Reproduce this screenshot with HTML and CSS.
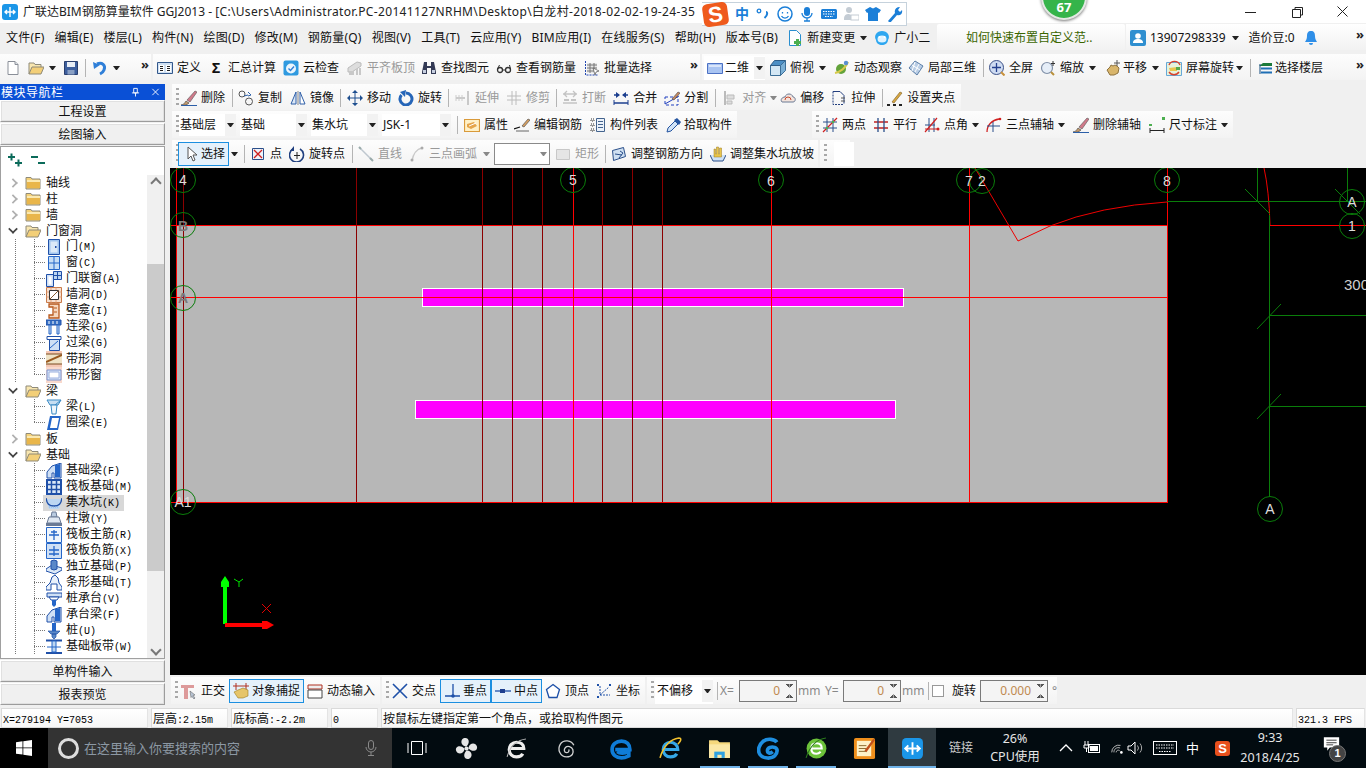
FILE: index.html
```html
<!DOCTYPE html>
<html lang="zh-CN">
<head>
<meta charset="utf-8">
<title>广联达BIM钢筋算量软件 GGJ2013</title>
<link rel="stylesheet" href="styles.css">
</head>
<body>
<svg class="defs" aria-hidden="true">
<symbol id="folder" viewBox="0 0 16 16"><path d="M1 4V2.500h5L7 4h8v10H1z" fill="#f5d27a" stroke="#8f8a78"/><path d="M2 6h13v7H2z" fill="#e9b64a"/><path d="M2 5h13v2H2z" fill="#fbe9b0"/></symbol>
<symbol id="folderopen" viewBox="0 0 16 16"><path d="M1 14V3h5l1 1.500h6V7" fill="#f8e6b0" stroke="#8f8a78"/><path d="M1 14l3-7h12l-3 7z" fill="#f3cf78" stroke="#8f8a78"/></symbol>
<symbol id="new" viewBox="0 0 16 16"><path d="M3 1.500h7l3 3v10H3z" fill="#fff" stroke="#8a8f98"/><path d="M10 1.500v3h3" fill="#dfe3e8" stroke="#8a8f98"/></symbol>
<symbol id="save" viewBox="0 0 16 16"><path d="M1.500 1.500h13v13h-13z" fill="#3d5f9e" stroke="#2a3f6e"/><path d="M4 2h8v5H4z" fill="#e8eef6"/><path d="M4.500 10h7v4.500h-7z" fill="#8aa0c4"/></symbol>
<symbol id="undo" viewBox="0 0 16 16"><path d="M5 4c5-2 9 1 7 6-.6 1.600-2 3-4 4" fill="none" stroke="#2f7fd8" stroke-width="3"/><path d="M1 2l1 7 6-4z" fill="#2f7fd8"/></symbol>
<symbol id="def" viewBox="0 0 16 16"><path d="M.5 2.500h15v11H.5z" fill="#cfe0f2" stroke="#33588c"/><path d="M2 5h5v7H2zM9 5h5v7H9z" fill="#fff"/><path d="M3 6.500h3M3 8.500h3M3 10.500h3M10 6.500h3M10 8.500h3M10 10.500h3" stroke="#222"/></symbol>
<symbol id="cloud" viewBox="0 0 16 16"><rect x=".5" y=".5" width="15" height="15" rx="2" fill="#2f9ae0"/><circle cx="8" cy="8.500" r="5" fill="#eaf5fc"/><path d="M5.500 8.500l2 2 3.500-4" fill="none" stroke="#2f7fd8" stroke-width="1.400"/></symbol>
<symbol id="flush" viewBox="0 0 16 16"><path d="M1 8l9-6 4 1v3l-9 6H1z" fill="#ddd" stroke="#bbb"/><path d="M2 11h5v4H2zM9 9h2v6H9zM12 8h2v7h-2z" fill="#c8c8c8"/></symbol>
<symbol id="binoc" viewBox="0 0 16 16"><path d="M3 2h3v4h4V2h3l2 10v2H10V8H6v6H1v-2z" fill="#333a55"/><path d="M2 10h3v3H2zM11 10h3v3h-3z" fill="#c7cfe0"/></symbol>
<symbol id="glass" viewBox="0 0 16 16"><circle cx="4" cy="10" r="2.500" fill="none" stroke="#333" stroke-width="1.300"/><circle cx="12" cy="10" r="2.500" fill="none" stroke="#333" stroke-width="1.300"/><path d="M6.500 10h3M1.500 9l2-4M14.500 9l-1-4" stroke="#333" fill="none"/></symbol>
<symbol id="batch" viewBox="0 0 16 16"><path d="M1.500 1v14h13" fill="none" stroke="#2247b0" stroke-dasharray="2 1"/><path d="M3 3h10v10H3z" fill="#e8e8e8"/><path d="M3 5h10M3 8h10M3 11h8M6 3v10M10 3v7" stroke="#777"/><path d="M9 8l6 3-3 1-1 3z" fill="#fff" stroke="#555" stroke-width=".7"/></symbol>
<symbol id="rect2d" viewBox="0 0 16 16"><path d="M.5 3.500h15v10H.5z" fill="#a9c4f2" stroke="#4c71c4"/><path d="M2 5h12v2H2z" fill="#d9e5fa"/></symbol>
<symbol id="cube" viewBox="0 0 16 16"><path d="M.5 5.500h10v10H.5z" fill="#d4e7f4" stroke="#3c6e97"/><path d="M.5 5.500l4-5h11l-5 5z" fill="#4c8fc5" stroke="#2e5d88"/><path d="M10.500 5.500l5-5v10l-5 5z" fill="#7bb0d6" stroke="#3c6e97"/></symbol>
<symbol id="orbit" viewBox="0 0 16 16"><circle cx="7" cy="9" r="5" fill="#63a33a"/><path d="M1 13c5-1 11-5 13-11" fill="none" stroke="#d6c94a" stroke-width="2"/><circle cx="12" cy="3" r="2.200" fill="#5a8fd0"/></symbol>
<symbol id="local3d" viewBox="0 0 16 16"><path d="M1 8l6-7 8 5-6 9z" fill="#b9cde5" stroke="#5c7fa8"/><path d="M4 5l8 5M7 2l-3 9M11 4l-4 8" stroke="#fff"/></symbol>
<symbol id="full" viewBox="0 0 16 16"><circle cx="7.500" cy="7.500" r="7" fill="#cfdcf2" stroke="#3a4f86"/><path d="M7.500 3v9M3 7.500h9" stroke="#25418f" stroke-width="1.300"/><path d="M12 12l3.500 3.500" stroke="#c8913c" stroke-width="2"/></symbol>
<symbol id="zoom" viewBox="0 0 16 16"><circle cx="7" cy="8" r="5.500" fill="#e6eef8" stroke="#8090a8" stroke-width="1.200"/><path d="M11 12l3 3" stroke="#b9903c" stroke-width="2"/><path d="M13 1v5M11 3.500h4" stroke="#333"/></symbol>
<symbol id="pan" viewBox="0 0 16 16"><path d="M2 10l3-3 1-2 2 1 2-1 2 1 2 2-1 5-4 2H5z" fill="#d9b66c" stroke="#8e7340"/><path d="M12 0v6M9 3h6" stroke="#555"/></symbol>
<symbol id="rots" viewBox="0 0 16 16"><path d="M.5 2.500h15v13H.5z" fill="#e7f2dc" stroke="#66a8d8"/><path d="M3 5a6 6 0 0 1 11 0M13 12a6 6 0 0 1-10 0" fill="none" stroke="#d8402c" stroke-width="1.400"/><path d="M3 8l8-1v4H4z" fill="#e9c550"/><path d="M10 7h4v3h-4z" fill="#56a94c"/></symbol>
<symbol id="layers" viewBox="0 0 16 16"><path d="M15 3H6L2 6h13" fill="#1c7a3a"/><path d="M15 7.500H4v2h11z" fill="#1f6fb5"/><path d="M15 11.500H4v2h11z" fill="#1f6fb5"/><path d="M3 4v10" stroke="#124a7e"/></symbol>
<symbol id="brush" viewBox="0 0 16 16"><path d="M0 15c2 0 3-1 5-4l3 2c-2 2-4 2.500-8 2z" fill="#c49a6c" stroke="#3d3d3d" stroke-width=".6"/><path d="M6 10L14 1l2 1-7 10z" fill="#d07a8a" stroke="#555" stroke-width=".6"/><path d="M0 15.500h16" stroke="#2b5fa8"/></symbol>
<symbol id="copy" viewBox="0 0 16 16"><circle cx="4" cy="4" r="3" fill="none" stroke="#555"/><circle cx="11" cy="11.500" r="3.500" fill="none" stroke="#555"/><path d="M6 6l4-1M10 2l3 3-3 1" fill="none" stroke="#2b5fa8"/></symbol>
<symbol id="mirror" viewBox="0 0 16 16"><path d="M6 2v12H1z" fill="#dbe7f6" stroke="#2f5fa8"/><path d="M10 2v12h5z" fill="#fff" stroke="#2f5fa8"/><path d="M8 1v14" stroke="#888"/></symbol>
<symbol id="move" viewBox="0 0 16 16"><path d="M8 1v14M1 8h14" stroke="#1f4f8f"/><path d="M8 0l3 3H5zM8 16l-3-3h6zM0 8l3-3v6zM16 8l-3 3V5z" fill="#1f4f8f"/></symbol>
<symbol id="rotate" viewBox="0 0 16 16"><path d="M3.500 5a6 6 0 1 0 4.500-2" fill="none" stroke="#2565b8" stroke-width="3"/><path d="M8 0l-1 7-5-5z" fill="#2565b8"/></symbol>
<symbol id="extend" viewBox="0 0 16 16"><path d="M13 1v14M1 8h9" stroke="#bbb" stroke-width="1.500"/><path d="M1 5v6M4 5v6M7 5v6" stroke="#ccc"/></symbol>
<symbol id="trim" viewBox="0 0 16 16"><path d="M6 1v14M10 1v14M1 6h14M1 10h14" stroke="#bcbcbc"/></symbol>
<symbol id="breakg" viewBox="0 0 16 16"><path d="M1 4h14M1 13h14M5 1L2 4l3 3M11 1l3 3-3 3" fill="none" stroke="#c3c3c3" stroke-width="1.300"/><path d="M2 10h5M9 10h5" stroke="#c3c3c3" stroke-width="2"/></symbol>
<symbol id="merge" viewBox="0 0 16 16"><path d="M1 13h14M1 5h5M10 5h5" stroke="#1c3f8f" stroke-width="1.400"/><path d="M7 5L3 2v6zM9 5l4-3v6z" fill="#1c3f8f"/><path d="M1 10v5M15 10v5" stroke="#1c3f8f"/></symbol>
<symbol id="split" viewBox="0 0 16 16"><path d="M1 14L15 6" stroke="#2040c0"/><path d="M1 7h13v8H1z" fill="none" stroke="#2040c0" stroke-dasharray="3 2"/><path d="M8 9l6-7 2 1-6 7z" fill="#c98a60" stroke="#444" stroke-width=".6"/></symbol>
<symbol id="align" viewBox="0 0 16 16"><path d="M3 1v14" stroke="#bbb" stroke-width="2"/><path d="M5 5h7v4H5zM5 11h5v3H5z" fill="#ddd" stroke="#bbb"/></symbol>
<symbol id="offset" viewBox="0 0 16 16"><path d="M2 12c-2-2 0-5 3-5 1-4 7-4 8 0 3 0 3 5 0 5z" fill="#f3e3dc" stroke="#6a7a95"/><path d="M5 10a3 3 0 0 1 6 0" fill="none" stroke="#c44a30"/></symbol>
<symbol id="stretch" viewBox="0 0 16 16"><path d="M2 1.500h7l4 4v8" fill="none" stroke="#233f7f"/><path d="M2 1.500v13h11" fill="none" stroke="#233f7f" stroke-dasharray="2 1"/><path d="M10 8h4M10 11h4" stroke="#555"/></symbol>
<symbol id="grips" viewBox="0 0 16 16"><path d="M5 12L13 2l2 1-8 10z" fill="#d8a840" stroke="#8a6a30" stroke-width=".7"/><path d="M0 15h3M6 15h3M12 15h3" stroke="#222" stroke-width="2"/></symbol>
<symbol id="prop" viewBox="0 0 16 16"><path d="M.5 2.500h15v12H.5z" fill="#fff1c7" stroke="#d99a3a" stroke-width="1.200"/><path d="M3 7l7-2 3 4-6 3-4-2z" fill="#e5a54a"/><path d="M5 9l7-3" stroke="#fff"/></symbol>
<symbol id="editr" viewBox="0 0 16 16"><path d="M8 9l6-7 2 1-6 7z" fill="#d8a060" stroke="#555" stroke-width=".7"/><path d="M0 12l6-2" stroke="#111" stroke-width="1.300"/><path d="M2 14h13" stroke="#666"/></symbol>
<symbol id="list" viewBox="0 0 16 16"><path d="M6.500 1.500h8v13h-8z" fill="#eaf1fa" stroke="#44648e"/><path d="M8 4.500h5M8 7.500h5M8 10.500h5" stroke="#44648e"/><path d="M1 2h3v2H1zM1 7h3v2H1zM1 12h3v2H1z" fill="none" stroke="#333" stroke-dasharray="1 1"/></symbol>
<symbol id="pick" viewBox="0 0 16 16"><path d="M1 15l1-4 7-7 3 3-7 7z" fill="#d0e2f6" stroke="#2454a0"/><path d="M8 3l3-2 4 4-2 3z" fill="#2454a0"/></symbol>
<symbol id="twop" viewBox="0 0 16 16"><path d="M5 1v14M11 1v14M1 5h14M1 11h14" stroke="#2a4f8a"/><path d="M1 15L15 1" stroke="#d02020" stroke-width="1.200"/><circle cx="5" cy="11" r="1.300" fill="#4caf50"/><circle cx="11" cy="5" r="1.300" fill="#4caf50"/></symbol>
<symbol id="para" viewBox="0 0 16 16"><path d="M1 5h14M1 11h14" stroke="#c02020" stroke-width="1.300"/><path d="M5 1v14M11 1v14" stroke="#2a4f8a" stroke-width="1.300"/></symbol>
<symbol id="angle" viewBox="0 0 16 16"><path d="M5 1v14M10 1v14M1 8h10" stroke="#2a4f8a"/><path d="M1 15L13 1" stroke="#d02020" stroke-width="1.200"/><path d="M1 12l14 0" stroke="#d02020"/><circle cx="14" cy="12" r="1.500" fill="#d02020"/></symbol>
<symbol id="arcax" viewBox="0 0 16 16"><path d="M1 15C1 8 6 3 13 2" fill="none" stroke="#d02020" stroke-width="1.300"/><path d="M1 9h13M7 5v10" stroke="#2a4f8a"/><circle cx="14" cy="2" r="1.300" fill="#d02020"/></symbol>
<symbol id="dim" viewBox="0 0 16 16"><path d="M1 13.500h14M1 11v5M15 11v5" stroke="#222"/><path d="M0 7h3v2H0zM13 0h3v3h-3z" fill="#4caf50"/></symbol>
<symbol id="cursor" viewBox="0 0 16 16"><path d="M4 1v12l3-3 2 5 2-1-2-5h4z" fill="#fff" stroke="#555"/></symbol>
<symbol id="point" viewBox="0 0 16 16"><path d="M2.500 2.500h11v11h-11z" fill="#eef3fa" stroke="#2a4f8a"/><path d="M4 4l8 8M12 4l-8 8" stroke="#d02020" stroke-width="1.300"/></symbol>
<symbol id="rotp" viewBox="0 0 16 16"><path d="M4 3a7 7 0 1 0 7 0" fill="none" stroke="#1f3f7f" stroke-width="1.600"/><path d="M5 0v5H1z" fill="#1f3f7f"/><path d="M8 6v7M5 9.500h6" stroke="#222"/></symbol>
<symbol id="line" viewBox="0 0 16 16"><path d="M2 2l11 11" stroke="#bfc7cf" stroke-width="1.500"/><path d="M1 1l2 2M12 12l3 3" stroke="#9aa" stroke-width="2"/></symbol>
<symbol id="arc" viewBox="0 0 16 16"><path d="M3 15C4 8 8 3 13 2" fill="none" stroke="#c9c9c9" stroke-width="1.500"/><circle cx="13" cy="2" r="1.500" fill="#aaa"/><circle cx="3" cy="14" r="1.500" fill="#aaa"/></symbol>
<symbol id="rectg" viewBox="0 0 16 16"><path d="M1.500 3.500h13v10h-13z" fill="#e5e5e5" stroke="#c8c8c8"/></symbol>
<symbol id="adj" viewBox="0 0 16 16"><path d="M1.500 4.500l11-3 2 9-12 4z" fill="#cfe0f2" stroke="#2a4f8a"/><path d="M4 8l7 1M9 5l3 2-4 5" fill="none" stroke="#2a4f8a"/></symbol>
<symbol id="pit" viewBox="0 0 16 16"><path d="M0 9l3 6h10l3-6" fill="#cfe2f5"/><path d="M0 9l3 6h10l3-6" fill="none" stroke="#2a4f8a"/><path d="M4 11V3h1.500v5h1V1h2v7h1V2h2v9z" fill="#e9c54a" stroke="#9a7a20" stroke-width=".5"/></symbol>
<symbol id="ortho" viewBox="0 0 16 16"><path d="M0 2h13v3H7v11H3V5H0z" fill="#dd9a9a"/><path d="M9 8l5 4-2 .5 2 2.500-1 1-2-2.500-1 1z" fill="#b8c4d4" stroke="#555" stroke-width=".5"/></symbol>
<symbol id="snap" viewBox="0 0 16 16"><path d="M3 0v7M13 0v7" stroke="#b03020"/><path d="M0 3h16" stroke="#b03020"/><path d="M1 9l4-2 5-2 5 2v6l-5 2H5z" fill="#e6c56a" stroke="#9a7a20" stroke-width=".6"/></symbol>
<symbol id="dyn" viewBox="0 0 16 16"><path d="M1 2h14v4H1z" fill="#eee" stroke="#b03020"/><path d="M1 7h14v8H1z" fill="#fff" stroke="#444"/></symbol>
<symbol id="cross" viewBox="0 0 16 16"><path d="M1 1l14 14M15 1L1 15" stroke="#1e50a8" stroke-width="1.600"/></symbol>
<symbol id="perp" viewBox="0 0 16 16"><path d="M9 1v12M1 13h15" stroke="#1e50a8" stroke-width="1.300"/><circle cx="9" cy="13" r="1.800" fill="#1e50a8"/></symbol>
<symbol id="mid" viewBox="0 0 16 16"><path d="M0 8h16" stroke="#1e50a8" stroke-width="1.300"/><rect x="5" y="6" width="5" height="4" fill="#1e3f8f"/></symbol>
<symbol id="vert" viewBox="0 0 16 16"><path d="M8 1.500l6.500 5-2.500 8H4l-2.500-8z" fill="#fff" stroke="#1e50a8" stroke-width="1.300"/></symbol>
<symbol id="coord" viewBox="0 0 16 16"><path d="M4 3v9h10M4 12L13 4" fill="none" stroke="#1e50a8" stroke-dasharray="2 1"/><path d="M1 1h2v2H1zM13 1h2v2h-2zM1 13h2v2H1z" fill="#1e50a8"/></symbol>
<symbol id="door" viewBox="0 0 16 16"><path d="M2.500 .5h11v15h-11z" fill="#9fc4ee" stroke="#2050a8"/><path d="M4.500 2.500h7v11h-7z" fill="#dbe9f8"/><rect x="9" y="7" width="1.500" height="2" fill="#2050a8"/></symbol>
<symbol id="win" viewBox="0 0 16 16"><path d="M2.500 1.500h11v13h-11z" fill="#c7def6" stroke="#2566c8"/><path d="M8 1.500v13M2.500 8h11" stroke="#2566c8"/></symbol>
<symbol id="doorw" viewBox="0 0 16 16"><path d="M.5 3.500h7v12h-7z" fill="#cfe0f5" stroke="#2050a8"/><path d="M2.500 5.500h3v8h-3z" fill="#fff"/><path d="M7.500.5h8v8h-8z" fill="#bcd6f2" stroke="#2050a8"/><path d="M11.500.5v8M7.500 4.500h8" stroke="#2050a8"/></symbol>
<symbol id="hole" viewBox="0 0 16 16"><path d="M.5 .5h15v15H.5z" fill="#f7e0d0" stroke="#c87a48"/><path d="M.5 5h15M.5 10h15M5 .5v15M10 .5v15" stroke="#e2a580"/><path d="M3.500 3.500h9v9h-9z" fill="#fff" stroke="#333"/><path d="M3.500 12.500l9-9" stroke="#8a5a30"/></symbol>
<symbol id="niche" viewBox="0 0 16 16"><path d="M3 1h10v14H3v-3h4V4H3z" fill="#f6d8bf" stroke="#b8581c" stroke-width="1.300"/><path d="M8 5h3M8 9h3" stroke="#b8581c"/></symbol>
<symbol id="lbeam" viewBox="0 0 16 16"><path d="M0 1h15v5H0z" fill="#3670c4" stroke="#2050a8"/><path d="M3 6h2v9H3zM11 6h2v9h-2z" fill="#cfe0f5" stroke="#2566c8"/><path d="M3 2v3M7 2v3M11 2v3" stroke="#fff"/></symbol>
<symbol id="lintel" viewBox="0 0 16 16"><path d="M1 1.500h14v3H1z" fill="#fff" stroke="#2050a8"/><path d="M3.500 4.500h10v11h-10z" fill="#cfe0f5" stroke="#2050a8"/><path d="M4 13l8-7" stroke="#2566c8"/></symbol>
<symbol id="shole" viewBox="0 0 16 16"><path d="M0 0h16v16H0z" fill="#f5c8b4"/><path d="M0 3h16v10H0z" fill="#efe3c6"/><path d="M0 11l16-7" stroke="#9a5a20" stroke-width="2"/><path d="M0 3h16M0 13h16" stroke="#7a4a20"/></symbol>
<symbol id="swin" viewBox="0 0 16 16"><path d="M0 0h16v16H0z" fill="#f8d8cc"/><path d="M1 3h14v10H1z" fill="#dbe5f6" stroke="#7a94d0"/><path d="M3 5h10v6H3z" fill="#fff" stroke="#9ab0e0"/></symbol>
<symbol id="beam" viewBox="0 0 16 16"><path d="M1 1h14l-3 5H4z" fill="#c6def2" stroke="#3a8ac4"/><path d="M5 6h6l-1 9H6z" fill="#eef6fc" stroke="#3a8ac4"/><path d="M9 6l6-5" stroke="#3a8ac4"/></symbol>
<symbol id="ring" viewBox="0 0 16 16"><path d="M4 1h11l-3 14H1z" fill="#2566c8"/><path d="M6 3h7l-2 10H4z" fill="#fff"/></symbol>
<symbol id="fbeam" viewBox="0 0 16 16"><path d="M1 15V9l5-6 9-3v15H8V10H6v5z" fill="#cfe0f5" stroke="#2050a8"/><path d="M9 2l5-1v13H9z" fill="#2566c8"/></symbol>
<symbol id="raft" viewBox="0 0 16 16"><path d="M1 1h14v14H1z" fill="#dbe9f8" stroke="#2050a8" stroke-width="2"/><path d="M5.500 1v14M10.500 1v14M1 5.500h14M1 10.500h14" stroke="#2050a8" stroke-width="1.500"/></symbol>
<symbol id="pitt" viewBox="0 0 16 16"><path d="M0 4l3 10h10l3-10" fill="#bcd6f2"/><path d="M0 3c1 6 3 8 8 8s7-2 8-8" fill="none" stroke="#2050a8" stroke-width="1.400"/><path d="M3 12h10" stroke="#88b0e0" stroke-dasharray="1 1"/></symbol>
<symbol id="pier" viewBox="0 0 16 16"><path d="M6 1h4l1 5H5z" fill="#b9cbe0" stroke="#6a7a95"/><path d="M3 6h10l2 6H1z" fill="#dfe7f1" stroke="#6a7a95"/><path d="M0 12h16v3H0z" fill="#6a7a95"/></symbol>
<symbol id="rmain" viewBox="0 0 16 16"><path d="M.5 .5h15v15H.5z" fill="#eef5fc" stroke="#2566c8"/><path d="M3 8h10M8 3v10M5 5h6" stroke="#2566c8" stroke-width="1.300"/></symbol>
<symbol id="rneg" viewBox="0 0 16 16"><path d="M.5 .5h15v15H.5z" fill="#cfe0f5" stroke="#2566c8"/><path d="M3 7h10M8 3v10M3 11h10" stroke="#2566c8" stroke-width="1.300"/></symbol>
<symbol id="iso" viewBox="0 0 16 16"><path d="M0 10l6-4 10 3v2l-7 4L0 12z" fill="#dbe9f8" stroke="#2050a8"/><path d="M5 2l3-1 3 1v8l-3 1-3-1z" fill="#5a88c8" stroke="#2050a8"/></symbol>
<symbol id="sfound" viewBox="0 0 16 16"><path d="M0 15v-3l4-4 2-6 3-2 3 3 1 5 3 4v3h-5V9H5v6z" fill="#e9f1fb" stroke="#2050a8"/></symbol>
<symbol id="pcap" viewBox="0 0 16 16"><path d="M1 2h15v4H1z" fill="#cfe0f5" stroke="#2050a8"/><path d="M3 6h10l-2 3H5z" fill="#fff" stroke="#2050a8"/><path d="M6 9h4v5l-2 2-2-2z" fill="#2566c8"/></symbol>
<symbol id="pile" viewBox="0 0 16 16"><path d="M6 0h4v8H6z" fill="#2566c8"/><path d="M2 8h12l-3 3H5zM6 11h4v3l-2 2-2-2z" fill="#5a88c8" stroke="#2050a8" stroke-width=".7"/></symbol>
<symbol id="sboard" viewBox="0 0 16 16"><path d="M0 1.500h16M0 14h16" stroke="#2050a8" stroke-width="2"/><path d="M6 2h4v11H6z" fill="#bcd6f2" stroke="#2566c8"/><path d="M1 8h14" stroke="#2566c8"/></symbol>
</svg>

<div class="app">
  <header class="title">
    <svg class="logo" viewBox="0 0 16 16"><rect width="16" height="16" rx="3" fill="#1b96e8"/><path d="M8 3v10M3.500 8h9M5 6L3 8l2 2M11 6l2 2-2 2" fill="none" stroke="#fff" stroke-width="1.400"/></svg>
    <span class="title-text">广联达BIM钢筋算量软件 GGJ2013 - <span class="title-path">[C:\Users\Administrator.PC-20141127NRHM\Desktop\白龙村-2018-02-02-19-24-35</span></span>
    <div class="winctl">
      <span class="wc"><svg class="ic" viewBox="0 0 16 16"><path d="M2 8.500h11" stroke="#222"/></svg></span>
      <span class="wc"><svg class="ic" viewBox="0 0 16 16"><path d="M3.500 5.500h8v8h-8zM6 5V3.500h7.500V11H12" fill="none" stroke="#222"/></svg></span>
      <span class="wc"><svg class="ic" viewBox="0 0 16 16"><path d="M2.500 2.500l10 10M12.500 2.500l-10 10" stroke="#222"/></svg></span>
    </div>
  </header>

  <div class="ime">
    <span class="ime-s">S</span>
    <span class="ime-zh">中</span>
    <svg class="ime-ic" viewBox="0 0 16 16"><circle cx="4" cy="5" r="1.800" fill="none" stroke="#1b7fd8" stroke-width="1.300"/><path d="M11 6c1.500 0 2 3-1.500 6" fill="none" stroke="#1b7fd8" stroke-width="2"/></svg>
    <svg class="ime-ic" viewBox="0 0 16 16"><circle cx="8" cy="8" r="7" fill="#fff" stroke="#1b7fd8" stroke-width="1.500"/><path d="M5.500 6v1.500M10.500 6v1.500M4.500 10a4 4 0 0 0 7 0" stroke="#1b7fd8" fill="none" stroke-width="1.300"/></svg>
    <svg class="ime-ic" viewBox="0 0 16 16"><rect x="5" y="1" width="6" height="9" rx="3" fill="#1b7fd8"/><path d="M3 7a5 5 0 0 0 10 0M8 12v3M5 15h6" fill="none" stroke="#1b7fd8" stroke-width="1.300"/></svg>
    <svg class="ime-ic" viewBox="0 0 16 16"><rect y="3" width="16" height="10" rx="1.500" fill="#1b7fd8"/><path d="M2 5.500h12M2 8h12M4 10.500h8" stroke="#fff" stroke-dasharray="1.500 1"/></svg>
    <svg class="ime-ic" viewBox="0 0 16 16"><circle cx="6" cy="4" r="3" fill="#c4ccd4"/><path d="M1 13c0-4 2-5 5-5l2 1v5H1z" fill="#c4ccd4"/><rect x="8" y="9" width="8" height="5" fill="#fff" stroke="#c4ccd4"/></svg>
    <svg class="ime-ic" viewBox="0 0 16 16"><path d="M5 1l3 1.500L11 1l5 3-2 3-1-.5V15H3V6.500L2 7 0 4z" fill="#1b7fd8"/></svg>
    <svg class="ime-ic" viewBox="0 0 16 16"><path d="M1 15l7-8c-1-3 1-6 5-6l-2 3 2 2 2-2c1 4-2 6-5 5l-7 8z" fill="#1b7fd8"/></svg>
  </div>
  <div class="badge"><span>67</span></div>

  <div class="menubar">
    <nav class="menu">
      <span class="mi">文件(F)</span><span class="mi">编辑(E)</span><span class="mi">楼层(L)</span><span class="mi">构件(N)</span><span class="mi">绘图(D)</span><span class="mi">修改(M)</span><span class="mi">钢筋量(Q)</span><span class="mi">视图(V)</span><span class="mi">工具(T)</span><span class="mi">云应用(Y)</span><span class="mi">BIM应用(I)</span><span class="mi">在线服务(S)</span><span class="mi">帮助(H)</span><span class="mi">版本号(B)</span>
      <span class="t n1"><svg class="ic" viewBox="0 0 16 16"><path d="M2.500 .5h7l4 4v11h-11z" fill="#fff" stroke="#2a8fd0"/><path d="M9 9h3v2h2v3h-2v2H9v-2H7v-3h2z" fill="#4caf50"/></svg>新建变更</span><i class="dd"></i>
      <span class="t"><svg class="ic" viewBox="0 0 16 16"><path d="M8 1a7 6 0 0 1 6 9c0 3-3 5-6 5s-6-2-6-5A7 6 0 0 1 8 1z" fill="#2ea7f0"/><ellipse cx="8" cy="9" rx="4.500" ry="3.500" fill="#dff3ff"/><circle cx="5.500" cy="7" r="1" fill="#fff"/><circle cx="10.500" cy="7" r="1" fill="#fff"/></svg>广小二</span>
    </nav>
    <div class="hint">如何快速布置自定义范..</div>
    <div class="user">
      <span class="t"><svg class="ic" viewBox="0 0 16 16"><rect width="16" height="16" rx="2" fill="#2f8fd0"/><circle cx="8" cy="6" r="2.800" fill="#fff"/><path d="M3 13c0-3 2-4 5-4s5 1 5 4z" fill="#fff"/></svg>13907298339</span><i class="dd"></i>
      <span class="bean">造价豆:0</span>
      <svg class="ic bell" viewBox="0 0 16 16"><path d="M8 1c3 0 4 2 4 5 0 3 1 4 2 6H2c1-2 2-3 2-6 0-3 1-5 4-5z" fill="#2f8fe8"/><path d="M6 13a2 2 0 0 0 4 0z" fill="#2f8fe8"/></svg>
      <b class="more end">&raquo;</b>
    </div>
  </div>

  <div class="tb1">
    <div class="seg w151">
      <svg class="ic"><use href="#new"/></svg>
      <svg class="ic"><use href="#folderopen"/></svg><i class="dd p1"></i>
      <svg class="ic p3"><use href="#save"/></svg><i class="sep n1"></i>
      <svg class="ic p1"><use href="#undo"/></svg><i class="dd p1"></i>
      <b class="more end">&raquo;</b>
    </div>
    <div class="seg w547 p4l">
      <span class="t"><svg class="ic"><use href="#def"/></svg>定义</span>
      <span class="t"><span class="sigma">Σ</span>汇总计算</span>
      <span class="t"><svg class="ic"><use href="#cloud"/></svg>云检查</span>
      <span class="t off p1"><svg class="ic"><use href="#flush"/></svg>平齐板顶</span>
      <span class="t n1"><svg class="ic"><use href="#binoc"/></svg>查找图元</span>
      <span class="t"><svg class="ic"><use href="#glass"/></svg>查看钢筋量</span>
      <span class="t p1"><svg class="ic"><use href="#batch"/></svg>批量选择</span>
      <b class="more end">&raquo;</b>
    </div>
    <div class="seg grow">
      <span class="dim2"><svg class="ic"><use href="#rect2d"/></svg>二维<i class="dd-box"><i class="dd"></i></i></span>
      <span class="t n2"><svg class="ic"><use href="#cube"/></svg>俯视</span><i class="dd p1"></i>
      <span class="t p4"><svg class="ic"><use href="#orbit"/></svg>动态观察</span>
      <span class="t n1"><svg class="ic"><use href="#local3d"/></svg>局部三维</span><i class="sep"></i>
      <span class="t"><svg class="ic"><use href="#full"/></svg>全屏</span>
      <span class="t"><svg class="ic"><use href="#zoom"/></svg>缩放</span><i class="dd p1"></i>
      <span class="t g2 p5"><svg class="ic"><use href="#pan"/></svg>平移</span><i class="dd p1"></i>
      <span class="t p3"><svg class="ic"><use href="#rots"/></svg>屏幕旋转</span><i class="dd n2"></i><i class="sep p3"></i>
      <span class="t g2 p1"><svg class="ic"><use href="#layers"/></svg>选择楼层</span>
      <b class="more end">&raquo;</b>
    </div>
  </div>

  <main class="main">
    <aside class="nav">
      <div class="nav-title"><span>模块导航栏</span><span class="nav-ctl"><svg class="tiny" viewBox="0 0 10 10"><path d="M3 1h4v5H3zM1 6h8M5 6v4" fill="none" stroke="#fff"/></svg><svg class="tiny" viewBox="0 0 10 10"><path d="M1.500 1.500l7 7M8.500 1.500l-7 7" stroke="#fff"/></svg></span></div>
      <button class="nbtn">工程设置</button>
      <button class="nbtn">绘图输入</button>
      <div class="treebox">
        <div class="tree-tools">
          <svg class="ti" viewBox="0 0 16 14"><path d="M1 4h7M4.500 .5v7M8 10h7M11.500 6.500v7" stroke="#0b6b5a" stroke-width="2"/></svg>
          <svg class="ti" viewBox="0 0 16 14"><path d="M1 4h7M8 10h7" stroke="#0b6b5a" stroke-width="2"/></svg>
        </div>
        <div class="tree-wrap">
          <div class="tree">
            <div class="r lv1"><i class="ch"></i><svg class="ic"><use href="#folder"/></svg><span>轴线</span></div>
            <div class="r lv1"><i class="ch"></i><svg class="ic"><use href="#folder"/></svg><span>柱</span></div>
            <div class="r lv1"><i class="ch"></i><svg class="ic"><use href="#folder"/></svg><span>墙</span></div>
            <div class="r lv1"><i class="ch open"></i><svg class="ic"><use href="#folderopen"/></svg><span>门窗洞</span></div>
            <div class="r lv2"><svg class="ic"><use href="#door"/></svg><span>门<span class="l">(M)</span></span></div>
            <div class="r lv2"><svg class="ic"><use href="#win"/></svg><span>窗<span class="l">(C)</span></span></div>
            <div class="r lv2"><svg class="ic"><use href="#doorw"/></svg><span>门联窗<span class="l">(A)</span></span></div>
            <div class="r lv2"><svg class="ic"><use href="#hole"/></svg><span>墙洞<span class="l">(D)</span></span></div>
            <div class="r lv2"><svg class="ic"><use href="#niche"/></svg><span>壁龛<span class="l">(I)</span></span></div>
            <div class="r lv2"><svg class="ic"><use href="#lbeam"/></svg><span>连梁<span class="l">(G)</span></span></div>
            <div class="r lv2"><svg class="ic"><use href="#lintel"/></svg><span>过梁<span class="l">(G)</span></span></div>
            <div class="r lv2"><svg class="ic"><use href="#shole"/></svg><span>带形洞</span></div>
            <div class="r lv2 last"><svg class="ic"><use href="#swin"/></svg><span>带形窗</span></div>
            <div class="r lv1"><i class="ch open"></i><svg class="ic"><use href="#folderopen"/></svg><span>梁</span></div>
            <div class="r lv2"><svg class="ic"><use href="#beam"/></svg><span>梁<span class="l">(L)</span></span></div>
            <div class="r lv2 last"><svg class="ic"><use href="#ring"/></svg><span>圈梁<span class="l">(E)</span></span></div>
            <div class="r lv1"><i class="ch"></i><svg class="ic"><use href="#folder"/></svg><span>板</span></div>
            <div class="r lv1"><i class="ch open"></i><svg class="ic"><use href="#folderopen"/></svg><span>基础</span></div>
            <div class="r lv2"><svg class="ic"><use href="#fbeam"/></svg><span>基础梁<span class="l">(F)</span></span></div>
            <div class="r lv2"><svg class="ic"><use href="#raft"/></svg><span>筏板基础<span class="l">(M)</span></span></div>
            <div class="r lv2"><div class="sel"><svg class="ic"><use href="#pitt"/></svg><span>集水坑<span class="l">(K)</span></span></div></div>
            <div class="r lv2"><svg class="ic"><use href="#pier"/></svg><span>柱墩<span class="l">(Y)</span></span></div>
            <div class="r lv2"><svg class="ic"><use href="#rmain"/></svg><span>筏板主筋<span class="l">(R)</span></span></div>
            <div class="r lv2"><svg class="ic"><use href="#rneg"/></svg><span>筏板负筋<span class="l">(X)</span></span></div>
            <div class="r lv2"><svg class="ic"><use href="#iso"/></svg><span>独立基础<span class="l">(P)</span></span></div>
            <div class="r lv2"><svg class="ic"><use href="#sfound"/></svg><span>条形基础<span class="l">(T)</span></span></div>
            <div class="r lv2"><svg class="ic"><use href="#pcap"/></svg><span>桩承台<span class="l">(V)</span></span></div>
            <div class="r lv2"><svg class="ic"><use href="#fbeam"/></svg><span>承台梁<span class="l">(F)</span></span></div>
            <div class="r lv2"><svg class="ic"><use href="#pile"/></svg><span>桩<span class="l">(U)</span></span></div>
            <div class="r lv2"><svg class="ic"><use href="#sboard"/></svg><span>基础板带<span class="l">(W)</span></span></div>
          </div>
          <div class="sb"><i class="sb-up"></i><div class="sb-track"><div class="sb-thumb"></div></div><i class="sb-dn"></i></div>
        </div>
      </div>
      <button class="nbtn">单构件输入</button>
      <button class="nbtn">报表预览</button>
    </aside>

    <section class="work">
      <div class="row h26">
        <div class="seg w789">
          <i class="grip"></i>
          <span class="t"><svg class="ic"><use href="#brush"/></svg>删除</span><i class="sep"></i>
          <span class="t"><svg class="ic"><use href="#copy"/></svg>复制</span>
          <span class="t p1"><svg class="ic"><use href="#mirror"/></svg>镜像</span><i class="sep n1"></i>
          <span class="t p1"><svg class="ic"><use href="#move"/></svg>移动</span>
          <span class="t"><svg class="ic"><use href="#rotate"/></svg>旋转</span><i class="sep n1"></i>
          <span class="t off p1"><svg class="ic"><use href="#extend"/></svg>延伸</span>
          <span class="t off"><svg class="ic"><use href="#trim"/></svg>修剪</span><i class="sep n1"></i>
          <span class="t off"><svg class="ic"><use href="#breakg"/></svg>打断</span>
          <span class="t"><svg class="ic"><use href="#merge"/></svg>合并</span>
          <span class="t"><svg class="ic"><use href="#split"/></svg>分割</span><i class="sep"></i>
          <span class="t off p1"><svg class="ic"><use href="#align"/></svg>对齐</span><i class="dd gray"></i>
          <span class="t n1"><svg class="ic"><use href="#offset"/></svg>偏移</span>
          <span class="t"><svg class="ic"><use href="#stretch"/></svg>拉伸</span><i class="sep"></i>
          <span class="t n1"><svg class="ic"><use href="#grips"/></svg>设置夹点</span>
        </div>
      </div>
      <div class="row h27 mt1">
        <div class="seg w565">
          <i class="grip"></i>
          <div class="combos n2">
            <span class="cb w57">基础层<i class="cb-a"><i class="dd"></i></i></span>
            <span class="cb w67">基础<i class="cb-a"><i class="dd"></i></i></span>
            <span class="cb w67">集水坑<i class="cb-a"><i class="dd"></i></i></span>
            <span class="cb w69">JSK-1<i class="cb-a"><i class="dd"></i></i></span>
          </div>
          <i class="sep n1"></i>
          <span class="t p1"><svg class="ic"><use href="#prop"/></svg>属性</span>
          <span class="t n1"><svg class="ic"><use href="#editr"/></svg>编辑钢筋</span>
          <span class="t p1"><svg class="ic"><use href="#list"/></svg>构件列表</span>
          <span class="t g2 p1"><svg class="ic"><use href="#pick"/></svg>拾取构件</span>
        </div>
        <div class="seg w421 ml75">
          <i class="grip"></i>
          <span class="t p1"><svg class="ic"><use href="#twop"/></svg>两点</span>
          <span class="t"><svg class="ic"><use href="#para"/></svg>平行</span>
          <span class="t"><svg class="ic"><use href="#angle"/></svg>点角</span><i class="dd"></i>
          <span class="t p3"><svg class="ic"><use href="#arcax"/></svg>三点辅轴</span><i class="dd"></i>
          <span class="t p4"><svg class="ic"><use href="#brush"/></svg>删除辅轴</span>
          <span class="t p1"><svg class="ic"><use href="#dim"/></svg>尺寸标注</span><i class="dd"></i>
        </div>
      </div>
      <div class="row h27 mt2">
        <div class="seg w646">
          <i class="grip"></i>
          <span class="t g1 on sel-btn n3"><svg class="ic"><use href="#cursor"/></svg>选择</span><i class="dd n2"></i><i class="sep p2"></i>
          <span class="t"><svg class="ic"><use href="#point"/></svg>点</span>
          <span class="t"><svg class="ic"><use href="#rotp"/></svg>旋转点</span><i class="sep"></i>
          <span class="t off"><svg class="ic"><use href="#line"/></svg>直线</span>
          <span class="t off"><svg class="ic"><use href="#arc"/></svg>三点画弧</span><i class="dd gray p2"></i>
          <span class="box w56"><i class="dd gray end"></i></span>
          <span class="t off n2"><svg class="ic"><use href="#rectg"/></svg>矩形</span><i class="sep n1"></i>
          <span class="t"><svg class="ic"><use href="#adj"/></svg>调整钢筋方向</span>
          <span class="t"><svg class="ic"><use href="#pit"/></svg>调整集水坑放坡</span>
        </div>
        <div class="seg w30 ml2"><i class="grip"></i><span class="blank"></span></div>
      </div>

      <svg class="cad" viewBox="170 168 1196 507" role="img" aria-label="CAD">
        <rect x="170" y="168" width="1196" height="507" fill="#000"/>
        <rect x="177" y="225" width="990" height="277" fill="#b7b7b7"/>
        <g class="mg">
          <rect x="422.500" y="288.500" width="481" height="18"/>
          <rect x="415.500" y="400.500" width="480" height="18"/>
        </g>
        <path class="rd" d="M170 225.500H1167.500M1270 225.500H1366M171 297.500H1167.500M171 502.500H1167.500M176.500 168V502M573.500 168V502M771.500 168V502M969.500 168V502M1167.500 168V502"/>
        <path class="dk" d="M183.500 168V502M356.500 168V502M482.500 168V502M512.500 168V502M542.500 168V502M602.500 168V502M632.500 168V502M662.500 168V502"/>
        <path class="rc" d="M975 168L1018 241L1050 226Q1100 206 1167 202M1264 168Q1269 190 1270 225"/>
        <path class="gn" d="M1167 201.500H1366M1257.500 168V201M1347.500 168V201M1269.500 215V497M1270 315.500H1366M1270 406.500H1366"/>
        <path class="tk" d="M1245 189L1270 214M1335 189L1360 214M1257 329L1281 304M1257 419L1281 394"/>
        <g class="ax">
          <circle cx="183" cy="180" r="12.500"/><circle cx="183" cy="225" r="12.500"/><circle cx="183" cy="298" r="12.500"/><circle cx="183" cy="502" r="12.500"/>
          <circle cx="573" cy="180" r="12.500"/><circle cx="771" cy="180" r="12.500"/><circle cx="969" cy="180" r="12.500"/><circle cx="982" cy="181" r="12.500"/><circle cx="1167" cy="180" r="12.500"/>
          <circle cx="1352" cy="202" r="12.500"/><circle cx="1352" cy="226" r="12.500"/><circle cx="1270" cy="509" r="12.500"/>
        </g>
        <g class="lab">
          <text x="183" y="185">4</text><text x="573" y="185">5</text><text x="771" y="186">6</text><text x="969" y="186">7</text><text x="982" y="186">2</text><text x="1167" y="186">8</text>
          <text x="1352" y="207">A</text><text x="1352" y="231">1</text><text x="1270" y="514">A</text><text x="183" y="507">A1</text>
          <text class="gy" x="183" y="231">B</text><text class="gy" x="183" y="303">A</text>
          <text class="big" x="1344" y="290">300</text>
        </g>
        <path d="M223 624V587H221V582L225 576L229 582V587H227V624z" fill="#00ff00"/>
        <path d="M225 623H262V621H267L274 625L267 629H262V627H225z" fill="#ff0000"/>
        <path d="M234 579L239 582L243 579M239 582V587" fill="none" stroke="#00e000"/>
        <path d="M262 604L271 613M271 604L262 613" fill="none" stroke="#e00000"/>
      </svg>

      <div class="snapbar">
        <div class="seg w209">
          <i class="grip"></i>
          <span class="t p1"><svg class="ic"><use href="#ortho"/></svg>正交</span>
          <span class="t g3 on n3"><svg class="ic"><use href="#snap"/></svg>对象捕捉</span>
          <span class="t n4"><svg class="ic"><use href="#dyn"/></svg>动态输入</span>
        </div>
        <div class="seg w263 ml2">
          <i class="grip"></i>
          <span class="t p1"><svg class="ic"><use href="#cross"/></svg>交点</span>
          <span class="t g3 on n3"><svg class="ic"><use href="#perp"/></svg>垂点</span>
          <span class="t g3 on n7"><svg class="ic"><use href="#mid"/></svg>中点</span>
          <span class="t n4"><svg class="ic"><use href="#vert"/></svg>顶点</span>
          <span class="t"><svg class="ic"><use href="#coord"/></svg>坐标</span>
        </div>
        <div class="seg w410 ml2">
          <i class="grip"></i>
          <span class="cb w58 n1 tall">不偏移<i class="cb-a"><i class="dd"></i></i></span>
          <i class="sep n3"></i>
          <span class="lbl n3 w16">X=</span>
          <span class="spin w58 n4">0<i class="sp"></i></span>
          <span class="lbl n6 w22">mm</span>
          <span class="lbl n2 w16">Y=</span>
          <span class="spin w58 n5">0<i class="sp"></i></span>
          <span class="lbl n6 w22">mm</span>
          <i class="sep n3"></i>
          <span class="chk n2"></span>
          <span class="lab2 p1">旋转</span>
          <span class="spin w68 n3">0.000<i class="sp"></i></span>
          <span class="lbl n3">°</span>
        </div>
      </div>
    </section>
  </main>

  <div class="status">
    <div class="c w147"><span class="m">X=279194 Y=7053</span></div>
    <div class="c w77">层高<span class="m">:2.15m</span></div>
    <div class="c w97">底标高<span class="m">:-2.2m</span></div>
    <div class="c w47"><span class="m">0</span></div>
    <div class="c grow">按鼠标左键指定第一个角点，或拾取构件图元</div>
    <div class="c w69"><span class="m">321.3 FPS</span></div>
  </div>

  <footer class="task">
    <div class="start"><svg class="win" viewBox="0 0 16 16"><path d="M0 2.200l6.500-.9v6.200H0zM7.300 1.200L16 0v7.500H7.300zM0 8.300h6.500v6.300L0 13.800zM7.300 8.300H16V16l-8.700-1.200z" fill="#fff"/></svg></div>
    <div class="search">
      <i class="ring"></i><span class="q">在这里输入你要搜索的内容</span>
      <svg class="mic" viewBox="0 0 12 16"><rect x="3.500" y=".5" width="5" height="9" rx="2.500" fill="none" stroke="#8a8a8a"/><path d="M1 7a5 5 0 0 0 10 0M6 12v3M3 15.500h6" fill="none" stroke="#8a8a8a"/></svg>
    </div>
    <div class="app-slot"><svg class="ts" viewBox="0 0 20 20"><path d="M4.500 3.500h11v13h-11zM1 5v10M19 5v10" fill="none" stroke="#fff"/></svg></div>
    <div class="app-slot mg1"><svg class="ta" viewBox="0 0 22 22"><circle cx="11" cy="11" r="2" fill="#e6e6e6"/><path d="M10 9C5 8 5 2 9 1s6 4 2 8zM13 10c1-5 7-5 8-1s-4 6-8 2zM12 13c5 1 5 7 1 8s-6-4-2-8zM9 12c-1 5-7 5-8 1s4-6 8-2z" fill="#e6e6e6"/></svg></div>
    <div class="app-slot mg1"><svg class="ta" viewBox="0 0 22 22"><path d="M4 11h14c0-4-3-6-7-6s-7 3-7 7 3 7 7 7c3 0 5-1 6-3" fill="none" stroke="#eee" stroke-width="3"/><path d="M2 19C5 8 12 3 20 2" fill="none" stroke="#bbb"/></svg></div>
    <div class="app-slot mg1"><svg class="ta" viewBox="0 0 22 22"><path d="M18 8C16 3 8 2 5 7s0 12 6 12 7-4 6-7-5-4-7-2-1 5 1 5 3-2 2-3" fill="none" stroke="#d0d0d0" stroke-width="1.300"/></svg></div>
    <div class="app-slot mg6"><svg class="ta" viewBox="0 0 22 22"><path d="M5 12h14c0-5-3-8-8-8S2 7 2 12s4 8 9 8c3 0 5-1 7-2v-4c-4 2-9 2-11 0" fill="none" stroke="#0f7cd8" stroke-width="3.500"/></svg></div>
    <div class="app-slot"><svg class="ta" viewBox="0 0 22 22"><path d="M5 12h13c0-4-3-7-7-7s-7 3-7 7 3 7 7 7c3 0 5-1 6-3" fill="none" stroke="#35a8e8" stroke-width="3"/><path d="M1 20C4 9 11 2 19 1c3 0 2 3-1 6" fill="none" stroke="#f2c12e" stroke-width="1.500"/></svg></div>
    <div class="app-slot run"><svg class="ta" viewBox="0 0 22 22"><path d="M1 3h8l2 2h10v15H1z" fill="#f5d87c"/><path d="M1 7h20v13H1z" fill="#fbe8a6"/><path d="M6 20v-6h10v6z" fill="#2ea0e0"/><path d="M9 20v-3h4v3z" fill="#fbe8a6"/></svg></div>
    <div class="app-slot w48 run"><svg class="ta" viewBox="0 0 22 22"><path d="M19 5c-2-3-9-4-13-1S0 13 3 17s11 4 14 1 3-7 0-8-7 0-7 3 3 3 5 1" fill="none" stroke="#1e8ee0" stroke-width="3.500"/></svg></div>
    <div class="app-slot w48 run"><svg class="ta" viewBox="0 0 22 22"><circle cx="11" cy="11" r="9.500" fill="#6cc23a"/><path d="M6 11h10c0-3-2-5-5-5s-5 2-5 5 2 5 5 5c2 0 3-1 4-2" fill="none" stroke="#fff" stroke-width="2"/><path d="M1 20C5 8 12 2 20 1" fill="none" stroke="#2b7a1c"/></svg></div>
    <div class="app-slot w48"><svg class="ta" viewBox="0 0 24 24"><rect x="1" y="1" width="22" height="22" rx="2" fill="#ef8f1c"/><path d="M4 4h15v16H4z" fill="#fdf1c8"/><path d="M6 9h8M6 12h8M6 15h8" stroke="#8a6a30"/><path d="M12 14L21 2l2 1-9 13z" fill="#c0501c"/></svg></div>
    <div class="app-slot w48 active"><svg class="ta" viewBox="0 0 22 22"><rect x="1" y="1" width="20" height="20" rx="4" fill="#1b96e8"/><path d="M11 5v12M4 11h14M7 8l-3 3 3 3M15 8l3 3-3 3" fill="none" stroke="#fff" stroke-width="1.800"/></svg></div>
    <span class="tray-link">链接</span>
    <div class="cpu"><span>26%</span><span>CPU使用</span></div>
    <svg class="tr up" viewBox="0 0 14 14"><path d="M1 10l6-6 6 6" fill="none" stroke="#fff" stroke-width="1.300"/></svg>
    <svg class="tr bat" viewBox="0 0 18 14"><path d="M2 0v4M5 0v4M1 4h5v3H1zM3.500 7v4" stroke="#fff" fill="none"/><rect x="5.500" y="3.500" width="11" height="8" fill="none" stroke="#fff"/><rect x="7" y="5" width="8" height="5" fill="#fff"/></svg>
    <svg class="tr wifi" viewBox="0 0 16 14"><path d="M2 12a8 8 0 0 1 10-8M4.500 12a5 5 0 0 1 7-5M7 12a2.500 2.500 0 0 1 4-2" fill="none" stroke="#ccc"/><circle cx="13" cy="12" r="1.500" fill="#fff"/></svg>
    <svg class="tr vol" viewBox="0 0 16 14"><path d="M1 5h3l4-4v12l-4-4H1z" fill="none" stroke="#fff"/><path d="M10.500 4.500a4 4 0 0 1 0 5M13 2.500a7 7 0 0 1 0 9" fill="none" stroke="#aaa"/></svg>
    <svg class="tr kbd" viewBox="0 0 24 14"><rect x=".5" y=".5" width="23" height="13" fill="none" stroke="#fff"/><path d="M3 4h18M3 7h18M6 10.500h12" stroke="#fff" stroke-dasharray="1.500 1"/></svg>
    <span class="tray-zh">中</span>
    <span class="tray-s">S</span>
    <div class="clock"><span>9:33</span><span>2018/4/25</span></div>
    <div class="notify"><svg class="nt" viewBox="0 0 20 18"><path d="M1 1h18v12H8l-3 4v-4H1z" fill="#fff"/><path d="M4 4.500h12M4 7.500h12M4 10h8" stroke="#222"/></svg><span class="nbadge">1</span></div>
  </footer>
</div>
</body>
</html>
```

FILE: styles.css
```css
* { box-sizing: border-box; }
html, body { margin: 0; padding: 0; height: 100%; background: #f0f0f0; overflow: hidden; }
body { font: 12px/16px "Noto Sans", "Noto Sans CJK SC", sans-serif; color: #111; }
i { font-style: normal; display: block; }
.defs { width: 0; height: 0; display: block; }
.app { position: relative; width: 1366px; height: 768px; overflow: hidden; display: flex; flex-direction: column; }
.ic { width: 16px; height: 16px; flex: none; display: block; }

/* margins for fine placing along a toolbar */
.p1 { margin-left: 1px; } .p2 { margin-left: 2px; } .p3 { margin-left: 3px; } .p4 { margin-left: 4px; } .p5 { margin-left: 5px; }
.n1 { margin-left: -1px; } .n2 { margin-left: -2px; } .n3 { margin-left: -3px; } .n4 { margin-left: -4px; }
.n5 { margin-left: -5px; } .n6 { margin-left: -6px; } .n7 { margin-left: -7px; }
.ml2 { margin-left: 2px; } .ml75 { margin-left: 75px; }
.mt1 { margin-top: 1px; } .mt2 { margin-top: 2px; }

/* title */
.title { height: 23px; background: #fff; display: flex; align-items: center; padding-left: 2px; flex: none; }
.logo { width: 16px; height: 16px; margin-right: 5px; flex: none; }
.title-text { white-space: nowrap; color: #222; font-size: 12px; }
.title-path { letter-spacing: .34px; }
.winctl { margin-left: auto; display: flex; }
.wc { width: 46px; display: flex; justify-content: center; }

.ime { position: absolute; left: 702px; top: 2px; width: 205px; height: 24px; background: #fff; border: 1px solid #c6d2dc; border-left: 0; display: flex; align-items: center; padding-left: 33px; gap: 6px; }
.ime-s { position: absolute; left: 1px; top: 0; width: 25px; height: 23px; background: #ef5a1c; color: #fff; border-radius: 5px; font: bold 22px/23px "Liberation Sans", sans-serif; text-align: center; transform: rotate(-8deg); }
.ime-zh { color: #1b7fd8; font-weight: 700; font-size: 14px; }
.ime-ic { width: 16px; height: 16px; flex: none; }
.badge { position: absolute; left: 1041px; top: -26px; width: 46px; height: 46px; border-radius: 50%; background: #35b44a; border: 2px solid #e4e8e4; box-shadow: 0 1px 3px #777; color: #fff; font-weight: 700; font-size: 13px; text-align: center; display: flex; align-items: flex-end; justify-content: center; padding-bottom: 3px; }

/* menu */
.menubar { height: 31px; display: flex; flex: none; padding-top: 1px; }
.menu { width: 937px; display: flex; align-items: center; gap: 10px; padding-left: 6px; white-space: nowrap; padding-bottom: 3px; }
.mi { letter-spacing: .22px; }
.menu .dd { margin-left: -5px; }
.hint { width: 188px; height: 26px; line-height: 28px; background: linear-gradient(#fff, #f2f2f2); color: #3b6600; padding-left: 29px; border-radius: 2px; }
.user { flex: 1; height: 26px; margin-left: 1px; background: linear-gradient(#fff, #f2f2f2); display: flex; align-items: center; gap: 7px; padding: 2px 2px 0 4px; white-space: nowrap; }
.user .dd { margin-left: -1px; }
.bean { margin-left: 6px; }
.bell { margin-left: 1px; }
.t { display: flex; align-items: center; gap: 4px; white-space: nowrap; flex: none; }
.g1 { gap: 1px; } .g2 { gap: 2px; } .g3 { gap: 3px; }
.off { color: #999; }
.dd { width: 7px; height: 4px; flex: none; margin-left: -3px; margin-right: -3px; border-style: solid; border-width: 4px 3.500px 0; border-color: #222 transparent transparent; }
.dd.p1 { margin-left: -2px; } .dd.p2 { margin-left: -1px; } .dd.n2 { margin-left: -5px; }
.dd.gray { border-top-color: #888; }
.more { font-size: 13px; line-height: 10px; font-weight: 700; color: #222; align-self: flex-start; margin-top: 3px; }
.end { margin-left: auto; }
.sigma { width: 16px; text-align: center; font-weight: 700; font-size: 14px; }

/* toolbars */
.tb1 { height: 30px; display: flex; gap: 2px; flex: none; }
.seg { display: flex; align-items: center; gap: 7px; padding: 0 2px; background: linear-gradient(#fdfdfd, #f3f3f3); flex: none; min-width: 0; }
.tb1 .seg { height: 26px; padding-top: 2px; padding-left: 5px; }
.tb1 .seg.p4l { padding-left: 4px; }
.tb1 .seg.grow { padding-left: 2px; }
.h26 .seg { padding-top: 2px; }
.grow { flex: 1; }
.w151 { width: 151px; } .w547 { width: 547px; } .w789 { width: 789px; } .w565 { width: 565px; } .w421 { width: 421px; }
.w646 { width: 646px; } .w30 { width: 30px; } .w209 { width: 209px; } .w263 { width: 263px; } .w410 { width: 410px; }
.sep { width: 1px; height: 18px; background: #b4b4b4; flex: none; margin-right: -2px; }
.grip { width: 6px; height: 20px; flex: none; margin-right: -6px; background: repeating-linear-gradient(#a8a8a8 0 2px, transparent 2px 5px) center / 3px 20px no-repeat; }
.dim2 { width: 61px; height: 24px; background: #fff; display: flex; align-items: center; gap: 2px; padding-left: 3px; flex: none; }
.dd-box { margin-left: auto; width: 11px; height: 22px; background: #f2f2f2; display: flex; align-items: center; justify-content: center; }
.dd-box .dd { margin: 0; }

.main { flex: 1; display: flex; min-height: 0; }
.nav { width: 170px; flex: none; display: flex; flex-direction: column; padding-right: 5px; }
.nav-title { height: 16px; background: #0a50d6; color: #fff; font-size: 12px; line-height: 15px; letter-spacing: .5px; display: flex; justify-content: space-between; align-items: center; padding: 0 0 0 1px; flex: none; }
.nav-ctl { display: flex; gap: 11px; padding-right: 5px; }
.tiny { width: 9px; height: 10px; display: block; }
.nbtn { height: 22px; margin: 0 0 1px; width: 165px; background: #f0f0f0; border: 1px solid; border-color: #fff #9c9c9c #9c9c9c #fff; box-shadow: inset 0 0 0 1px #e0e0e0; font: inherit; color: #111; padding: 2px 0 0; flex: none; }
.treebox { flex: 1; min-height: 0; border: 1px solid #a0a0a0; background: #fff; margin: 0 0 1px; width: 165px; display: flex; flex-direction: column; }
.tree-tools { height: 28px; display: flex; gap: 7px; padding: 6px 0 0 6px; flex: none; }
.ti { width: 16px; height: 14px; }
.tree-wrap { flex: 1; min-height: 0; display: flex; overflow: hidden; }
.tree { flex: 1; min-width: 0; overflow: hidden; }
.r { height: 16px; display: flex; align-items: center; white-space: nowrap; }
.r .ic { width: 16px; height: 16px; }
.lv1 { padding-left: 9px; gap: 0; }
.lv1 .ic { margin-left: 6px; margin-right: 5px; }
.ch { width: 8px; height: 8px; border-right: 2px solid #b0b0b0; border-top: 2px solid #b0b0b0; transform: rotate(45deg) scale(.85); margin-left: -1px; margin-right: 2px; flex: none; }
.ch.open { border-color: #444; transform: translate(0, -2px) rotate(135deg) scale(.85); }
.lv2 { padding-left: 45px; gap: 4px; background:
  repeating-linear-gradient(90deg, #777 0 1px, transparent 1px 2px) 33px 7px / 12px 1px no-repeat,
  repeating-linear-gradient(#777 0 1px, transparent 1px 2px) 33px 0 / 1px 100% no-repeat,
  repeating-linear-gradient(#777 0 1px, transparent 1px 2px) 14px 0 / 1px 100% no-repeat; }
.lv2.last { background:
  repeating-linear-gradient(90deg, #777 0 1px, transparent 1px 2px) 33px 7px / 12px 1px no-repeat,
  repeating-linear-gradient(#777 0 1px, transparent 1px 2px) 33px 0 / 1px 8px no-repeat,
  repeating-linear-gradient(#777 0 1px, transparent 1px 2px) 14px 0 / 1px 100% no-repeat; }
.sel { display: flex; align-items: center; gap: 4px; height: 16px; width: 81px; margin-left: -3px; padding-left: 3px; background: #d8d8d8; }
.l { font: 10px/16px "Liberation Mono", monospace; color: #000; }
.sb { width: 17px; flex: none; background: #f0f0f0; display: flex; flex-direction: column; margin-top: -1px; }
.sb-up, .sb-dn { height: 17px; flex: none; }
.sb-up::after, .sb-dn::after { content: ""; display: block; width: 6px; height: 6px; border-left: 2px solid #777; border-top: 2px solid #777; transform: translate(5px, 5px) rotate(45deg); }
.sb-dn::after { transform: translate(5px, 5px) rotate(225deg); }
.sb-track { flex: 1; padding-top: 73px; }
.sb-thumb { height: 307px; background: #cbcbcb; }

.work { flex: 1; min-width: 0; display: flex; flex-direction: column; }
.row { display: flex; flex: none; padding-left: 2px; }
.h26 { height: 26px; } .h27 { height: 27px; }
.combos { display: flex; gap: 4px; flex: none; }
.cb { height: 22px; background: #fff; display: flex; align-items: center; padding-left: 1px; flex: none; white-space: nowrap; }
.cb-a { margin-left: auto; width: 11px; height: 22px; background: #f2f2f2; display: flex; align-items: center; justify-content: center; }
.cb-a .dd { margin: 0; }
.tall { height: 26px; padding-left: 2px; }
.tall .cb-a { height: 22px; }
.w57 { width: 57px; } .w67 { width: 67px; } .w69 { width: 69px; } .w58 { width: 58px; } .w56 { width: 56px; } .w68 { width: 68px; }
.w16 { width: 16px; } .w22 { width: 22px; }
.on { border: 1px solid #1b8fe0; background: #e5f1fb; height: 24px; padding: 0 3px; }
.sel-btn { width: 51px; padding-left: 5px; }
.box { height: 22px; background: #fff; border: 1px solid #8a8a8a; display: flex; align-items: center; padding-right: 5px; flex: none; }
.blank { width: 20px; height: 24px; background: #fff; margin-left: 3px; flex: none; }
.seg.w30 .grip { margin-right: -4px; }

.cad { width: 1196px; height: 507px; display: block; margin-top: 1px; flex: none; }
.mg rect { fill: #ff00ff; stroke: #fff; }
.rd { fill: none; stroke: #ff0000; shape-rendering: crispEdges; }
.dk { fill: none; stroke: #8b0000; shape-rendering: crispEdges; }
.rc { fill: none; stroke: #ee0000; }
.gn { fill: none; stroke: #0a7d0a; shape-rendering: crispEdges; }
.tk { fill: none; stroke: #0a7d0a; }
.ax circle { fill: none; stroke: #0a7d0a; }
.lab text { font: 14px "Liberation Sans", sans-serif; fill: #dcdcdc; text-anchor: middle; }
.lab .gy { fill: #7a7a7a; font-weight: 700; }
.lab .big { font-size: 15px; text-anchor: start; fill: #cfcfcf; }

.snapbar { height: 30px; display: flex; padding: 2px 0 0 1px; flex: none; }
.snapbar .seg { height: 27px; }
.lbl { color: #888; flex: none; white-space: nowrap; }
.lab2 { flex: none; white-space: nowrap; }
.spin { height: 22px; background: #f4f4f4; border: 1px solid #7a7a7a; color: #c08a50; text-align: right; padding-right: 16px; line-height: 20px; position: relative; flex: none; }
.sp { position: absolute; right: 3px; top: 3px; width: 7px; height: 14px; background:
  linear-gradient(45deg, transparent 50%, #555 50%) 0 0 / 3.500px 4px no-repeat,
  linear-gradient(-45deg, transparent 50%, #555 50%) 100% 0 / 3.500px 4px no-repeat,
  linear-gradient(135deg, transparent 50%, #555 50%) 0 100% / 3.500px 4px no-repeat,
  linear-gradient(-135deg, transparent 50%, #555 50%) 100% 100% / 3.500px 4px no-repeat; }
.chk { width: 12px; height: 12px; border: 1px solid #999; background: #fff; flex: none; }

/* status */
.status { height: 22px; display: flex; gap: 3px; padding: 2px 1px 0; flex: none; }
.c { height: 20px; line-height: 20px; border: 1px solid #dadada; border-right-color: #e4e4e4; background: linear-gradient(#fff, #f6f6f6); padding-left: 1px; white-space: nowrap; flex: none; }
.c.grow { flex: 1; padding-left: 1px; }
.m { font: 10px/20px "Liberation Mono", monospace; color: #000; }
.w147 { width: 147px; } .w77 { width: 77px; } .w97 { width: 97px; } .w47 { width: 47px; } .w69 { width: 69px; }

/* taskbar */
.task { height: 40px; flex: none; background: #020b10; color: #e6e6e6; display: flex; align-items: center; }
.start { width: 48px; height: 40px; background: #000; display: flex; align-items: center; justify-content: center; flex: none; }
.win { width: 16px; height: 16px; }
.search { width: 344px; height: 40px; background: #333; display: flex; align-items: center; padding-left: 10px; flex: none; }
.ring { width: 21px; height: 21px; border-radius: 50%; border: 3px solid #ddd; flex: none; margin-right: 5px; }
.q { color: #8c98a4; font-size: 13px; white-space: nowrap; }
.mic { width: 12px; height: 16px; margin-left: auto; margin-right: 15px; }
.app-slot { width: 49px; height: 40px; display: flex; align-items: center; justify-content: center; flex: none; }
.app-slot.mg1 { margin-left: 1px; }
.app-slot.mg6 { margin-left: 6px; }
.app-slot.w48 { width: 48px; }
.run { background: linear-gradient(#6fb2e8, #6fb2e8) center bottom / 40px 2px no-repeat; }
.active { background: linear-gradient(#6fb2e8, #6fb2e8) center bottom / 100% 2px no-repeat, #2f3a40; }
.ts { width: 20px; height: 20px; }
.ta { width: 23px; height: 23px; }
.tray-link { margin-left: 13px; color: #ccc; flex: none; }
.cpu { margin-left: 17px; width: 50px; text-align: center; display: flex; flex-direction: column; line-height: 18px; flex: none; font-size: 12.500px; white-space: nowrap; align-items: center; }
.tr { height: 14px; flex: none; }
.up { width: 14px; margin-left: 19px; }
.bat { width: 18px; margin-left: 10px; }
.wifi { width: 14px; margin-left: 9px; }
.vol { width: 16px; margin-left: 3px; }
.kbd { width: 24px; margin-left: 10px; }
.tray-zh { margin-left: 9px; color: #fff; font-size: 13px; flex: none; }
.tray-s { margin-left: 16px; width: 15px; height: 15px; background: #e8501c; color: #fff; border-radius: 3px; font: bold 13px/15px "Liberation Sans", sans-serif; text-align: center; flex: none; }
.clock { margin-left: 8px; width: 64px; display: flex; flex-direction: column; align-items: center; line-height: 20px; font-size: 12.500px; flex: none; white-space: nowrap; }
.notify { margin-left: 15px; width: 30px; height: 30px; display: block; position: relative; flex: none; }
.nt { width: 17px; height: 16px; display: block; margin: 3px 0 0 6px; }
.nbadge { position: absolute; left: 12px; top: 12px; width: 17px; height: 17px; border-radius: 50%; background: #444; border: 1px solid #777; color: #fff; font: bold 11px/15px "Liberation Sans", sans-serif; text-align: center; }
```
